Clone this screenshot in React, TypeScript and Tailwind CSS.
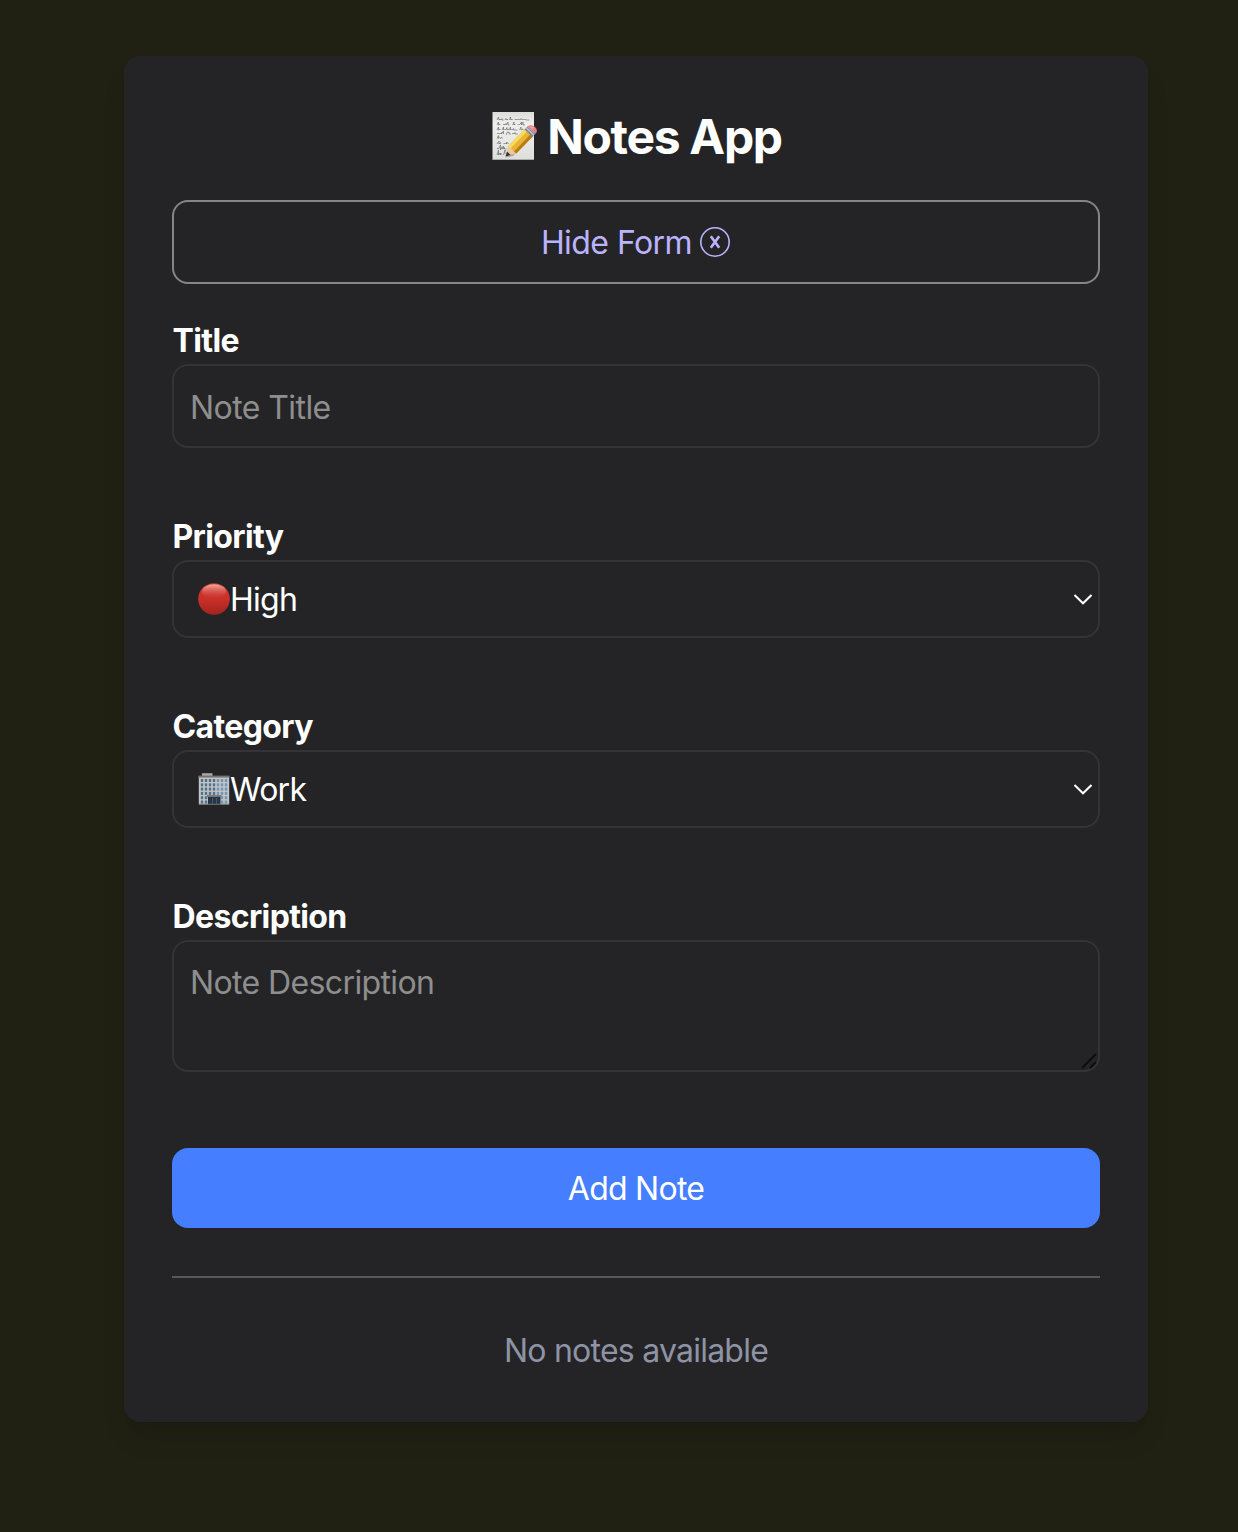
import type { ReactNode } from "react";

function MemoIcon() {
  return (
    <svg className="block h-[52px] w-[48px] shrink-0" viewBox="0 0 48 52" aria-hidden="true">
      <defs>
        <linearGradient id="paper" x1="0" y1="0" x2="0" y2="1">
          <stop offset="0" stopColor="#dcdcda" />
          <stop offset="0.25" stopColor="#efefed" />
          <stop offset="1" stopColor="#dededc" />
        </linearGradient>
      </defs>
      <rect x="1.5" y="2" width="41.5" height="48" fill="url(#paper)" />
      <path d="M2 49.5H43" stroke="#aaa" strokeWidth="1" />
      <g fill="none" stroke="#666" strokeWidth="0.65" strokeLinejoin="round">
        <path d="M6 10l1.5-3 .5 3q1-2 2 0l1-1.5v1.5h1.5m1.5 0q1-3 1.5 0l1-1v1m2 0l1-3 .3 3q1-2 2 0m2 0q1-2 1.5 0q1-2 2 0q1-2 2 0l1-1.5 1 1.5q1-2 2 0q1-2 2 0h3" />
        <path d="M6 15l1.5-3v3l1.5-1v1m3 0q1-2 2 0l1-1.5v1.5l2-3v3h1.5m3 0l1.5-3v3l1-1v1m2.5 0q1-2 2 0l2-3v3l1.5-3v3h2" />
        <path d="M6 20l1.5-3v3l1.5-1v1m2 0l1.5-3v3q1-2 2 0l1.5-2.5v2.5q1-2 2 0l1.5-3v3q1-2 2 0l1-1.5v1.5h4m2 0l1.5-3v3l2-1v1" />
        <path d="M6 24q1-2 1.5 0q1-2 2 0l1-1.5v1.5l2-3v3m2.5 1l1.5-3q1-1 1 1l1.5 0v2m2-1q1-2 2 0l1-1.5v1.5h3" />
        <path d="M6 28.5l1.5-3v3q1-2 2 0l1-1.5 1 1.5" />
        <path d="M6 34l2-3v3l1.5-1.5v1.5m3 0q1-2 2 0l1-1.5v1.5l1-1.5 1 1.5" />
        <path d="M6 39q1-2 1.5 0l2-4v5l1.5-3v2l1.5-3v3l1-1.5v1.5h2" />
        <path d="M6 45l1.5-5v5l1.5-2v2l1-2v2m2.5 0l1.5-5v4" />
      </g>
      <path d="M14 47.5L22 46L44 24L40 23Z" fill="#444" opacity="0.4" />
      <path d="M14.5 46.5L17.3 36L25.3 43.5Z" fill="#ecc99a" />
      <path d="M14.5 46.5L16 41.5L19.7 45Z" fill="#333" />
      <path d="M17.3 36L34 18.8L41.8 26.5L25.3 43.5Z" fill="#e9b534" />
      <path d="M17.3 36L34 18.8L36.3 21.2L19.7 38.2Z" fill="#f8d962" />
      <path d="M23 41.5L39.6 24.3L41.8 26.5L25.3 43.5Z" fill="#b97c17" />
      <path d="M33.5 19.5L36.5 16.5L44.3 24L41.3 27Z" fill="#7c899a" />
      <path d="M34.7 18.3L35.8 17.2L43.6 24.7L42.4 25.8Z" fill="#b7c2ce" />
      <path d="M36.5 16.5Q39.5 13.8 43.5 16.5Q48 20.5 44.3 24Z" fill="#e08088" />
      <path d="M38 16.7Q40.5 15.3 43 17.5L41.5 19.5Z" fill="#f0a4a8" />
    </svg>
  );
}

function RedCircleIcon() {
  return (
    <svg className="block size-8 shrink-0" viewBox="0 0 32 32" aria-hidden="true">
      <defs>
        <linearGradient id="ball" x1="0" y1="0" x2="0" y2="1">
          <stop offset="0" stopColor="#c93b31" />
          <stop offset="0.5" stopColor="#ca3028" />
          <stop offset="1" stopColor="#a0241d" />
        </linearGradient>
        <linearGradient id="shine" x1="0" y1="0" x2="0" y2="1">
          <stop offset="0" stopColor="#f6aaa2" />
          <stop offset="1" stopColor="#d4463b" stopOpacity="0" />
        </linearGradient>
      </defs>
      <circle cx="16" cy="16" r="15.8" fill="url(#ball)" />
      <ellipse cx="16" cy="8.5" rx="12" ry="7.2" fill="url(#shine)" />
    </svg>
  );
}

const floors = [6, 10.3, 14.6, 18.9, 23.2, 27.5];
const columns = [2.8, 6.8, 10.8, 14.8, 18.8, 22.8, 26.8];

function OfficeIcon() {
  return (
    <svg className="block size-8 shrink-0" viewBox="0 0 32 32" aria-hidden="true">
      <rect x="4" y="0.2" width="10.5" height="3" fill="#aaa6a1" />
      <rect x="0.8" y="3.5" width="30.4" height="28" fill="#c6c4c1" />
      <rect x="0.3" y="2.6" width="31.4" height="2" fill="#777370" />
      {floors.map((y) =>
        columns.map((x) => (
          <rect key={`${x}-${y}`} x={x} y={y} width="2.4" height="3" fill={x > 17 ? "#6c98bb" : "#4c7293"} />
        )),
      )}
      <rect x="9" y="22" width="14.5" height="2" fill="#827671" />
      <rect x="10" y="24" width="12.5" height="7.5" fill="#253746" />
      <path d="M14.5 25V31.5M18.5 25V31.5" stroke="#4f6678" strokeWidth="0.7" />
      <path d="M1 31.2H31" stroke="#77716c" strokeWidth="0.8" />
    </svg>
  );
}

function Field({ label, children }: { label: string; children: ReactNode }) {
  return (
    <div>
      <div className="h-12 pl-[0.5px] text-[32px] leading-[50px] font-bold tracking-[-0.62px] text-white">{label}</div>
      {children}
    </div>
  );
}

function Select({ icon, value }: { icon: ReactNode; value: string }) {
  return (
    <button
      type="button"
      className="flex h-[78px] w-full items-center rounded-2xl border-2 border-[#343436] pr-[6px] pl-6 text-white"
    >
      {icon}
      <span className="pt-0.5 leading-[48px] tracking-[-0.75px]">{value}</span>
      <svg className="ml-auto block h-5 w-5" viewBox="0 0 20 20" fill="none" stroke="white" strokeWidth="2" aria-hidden="true">
        <path d="M2.5 6L11 14.3L19.5 6" />
      </svg>
    </button>
  );
}

export default function App() {
  return (
    <main className="min-h-[1532px] bg-[#202013] pt-14 pl-31 font-['Inter',sans-serif] text-[32px] font-normal">
      <section className="h-[1366px] w-[1024px] rounded-2xl bg-[#242426] p-12 shadow-[0_20px_30px_-6px_rgba(0,0,0,0.1),0_8px_12px_-8px_rgba(0,0,0,0.1)]">
        <h1 className="mb-8 flex h-16 items-center justify-center gap-2 pl-px text-[48px] leading-[64px] font-bold tracking-[-1.3px] text-white">
          <MemoIcon />
          <span className="pt-0.5">Notes App</span>
        </h1>
        <button
          type="button"
          className="mb-8 flex h-[84px] w-full items-center justify-center gap-[7px] rounded-2xl border-2 border-[#858587] text-[#bbb3ff]"
        >
          <span className="pt-0.5 leading-[48px] tracking-[-0.55px]">Hide Form</span>
          <svg className="block h-8 w-8" viewBox="0 0 32 32" fill="none" stroke="currentColor" aria-hidden="true">
            <circle cx="16" cy="16" r="14.2" strokeWidth="1.6" />
            <path d="M11.8 10.2L20.2 21.8M20.2 10.2L11.8 21.8" strokeWidth="2.6" />
          </svg>
        </button>
        <form className="flex flex-col gap-16">
          <Field label="Title">
            <input
              placeholder="Note Title"
              className="block h-[84px] w-full rounded-2xl border-2 border-[#343436] px-4 pt-0.5 tracking-[-0.57px] text-white placeholder:text-[#8e8e8e]"
            />
          </Field>
          <Field label="Priority">
            <Select icon={<RedCircleIcon />} value="High" />
          </Field>
          <Field label="Category">
            <Select icon={<OfficeIcon />} value="Work" />
          </Field>
          <Field label="Description">
            <div className="relative">
              <textarea
                placeholder="Note Description"
                className="block h-[132px] w-full resize-none rounded-2xl border-2 border-[#343436] px-4 pt-[17px] pb-4 leading-[48px] tracking-[-0.62px] text-white placeholder:text-[#8e8e8e]"
              />
              <svg className="absolute right-[3px] bottom-[3px] h-4 w-4" viewBox="0 0 16 16" fill="none" aria-hidden="true">
                <path d="M1 15L15 1M9 15L15 9" stroke="#0d0d0e" strokeWidth="2" />
              </svg>
            </div>
          </Field>
          <button type="button" className="mt-3 h-20 w-full rounded-2xl bg-[#457eff] pt-0.5 leading-[48px] tracking-[-0.75px] text-white">
            Add Note
          </button>
        </form>
        <hr className="mt-12 mb-12 border-t-2 border-[#59595b]" />
        <p className="pt-px text-center leading-[48px] tracking-[-0.76px] text-[#8e93a5]">No notes available</p>
      </section>
    </main>
  );
}
